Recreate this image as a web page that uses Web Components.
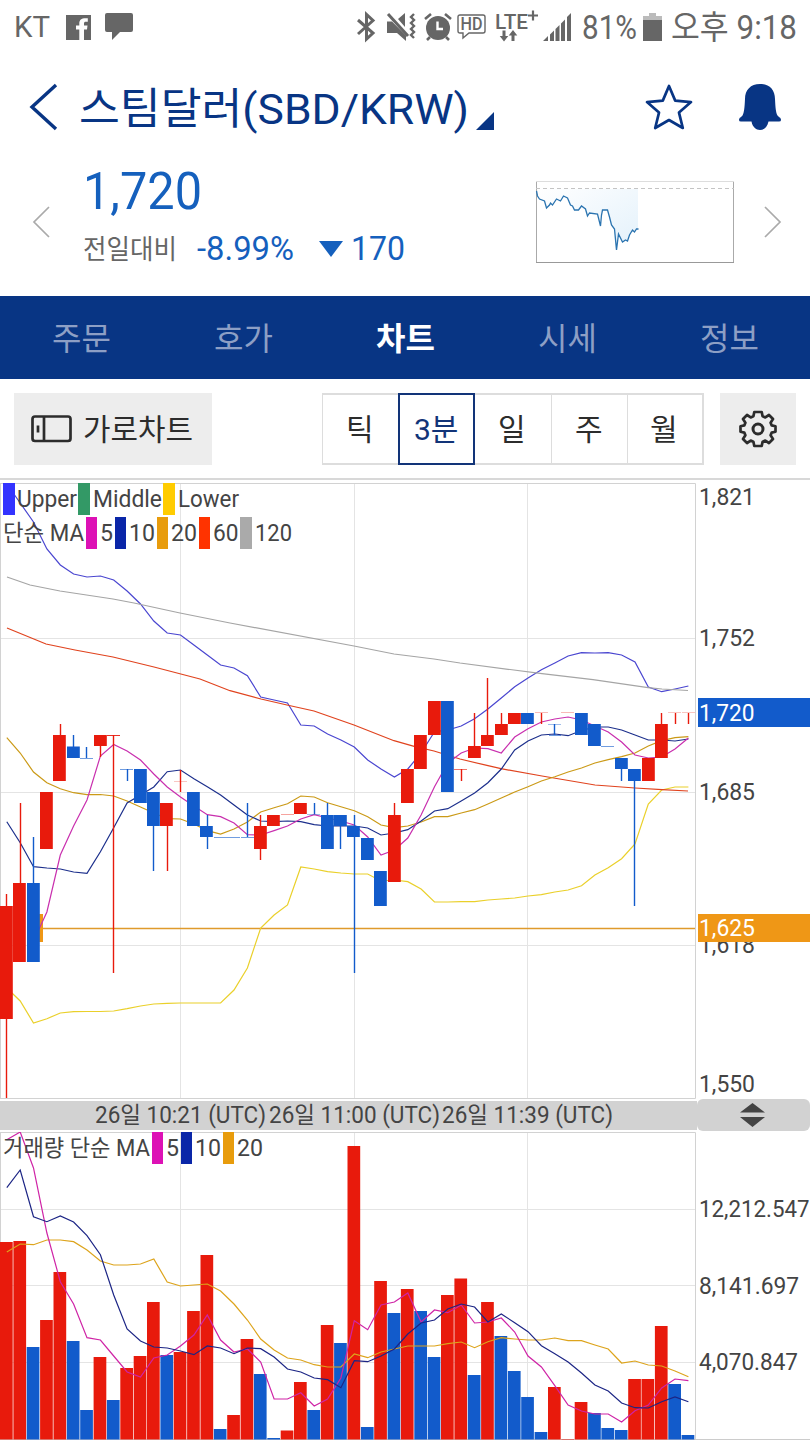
<!DOCTYPE html>
<html lang="ko">
<head>
<meta charset="utf-8">
<title>스팀달러(SBD/KRW)</title>
<style>
  body {
    margin: 0;
    width: 810px;
    height: 1440px;
    overflow: hidden;
    background: #fff;
    color: #444;
    font-family: Roboto, "Noto Sans CJK KR", sans-serif;
  }
</style>
</head>
<body>
<coin-app></coin-app>

<script>
// One line of text whose box is exactly cap-height tall; `width` squeezes it.
class CapText extends HTMLElement {

  constructor() {
    super();
    this.attachShadow({ mode: 'open' });
  }

  connectedCallback() {
    const size = Number(this.getAttribute('size') || 23);
    const width = this.getAttribute('width');
    const h = size * 0.711;
    const fit = width ? `textLength="${width}" lengthAdjust="spacingAndGlyphs"` : '';

    this.shadowRoot.innerHTML = `
      <style>
        :host { display: block; flex: none; }
        svg { display: block; overflow: visible; }
        text { fill: currentColor; white-space: pre; }
      </style>
      <svg height="${h}" width="${width || 1}">
        <text x="0" y="${h}" font-size="${size}" ${fit}>${this.getAttribute('text')}</text>
      </svg>
    `;

    if (!width) {
      const text = this.shadowRoot.querySelector('text');
      this.shadowRoot.querySelector('svg').setAttribute('width', text.getComputedTextLength());
    }
  }
}

customElements.define('cap-text', CapText);

const ICONS = {
  facebook: [25, 25, `<path fill="currentColor" fill-rule="evenodd" d="M0 0h25v25h-7V14.500h3l.5-4H18V8.500c0-1.200.5-1.700 1.800-1.700h2V3.300c-5.700-.7-8.500 1-8.500 5v2.200H10v4h3.300V25H0z"/>`],
  chat: [28, 28, `<path fill="currentColor" d="M2 0h24q2 0 2 2v15q0 2-2 2H15l-8 8v-8H2q-2 0-2-2V2q0-2 2-2z"/>`],
  bluetooth: [19, 30, `<path fill="none" stroke="currentColor" stroke-width="3" d="M1 8l15 13-6.500 6V2.500l6.500 6L1 22"/>`],
  mute: [30, 30, `<path fill="currentColor" d="M0 9.500h5l14 14V29l-9-8H0zM11 7l7-6v14z"/><path d="M1 2l20 22" stroke="currentColor" stroke-width="3"/><path fill="none" stroke="currentColor" stroke-width="2.400" d="M27 2l-3 3 3 3-3 3 3 3-3 3 3 3-3 3 3 3"/>`],
  alarm: [28, 30, `<circle cx="14" cy="16" r="12" fill="currentColor"/><path d="M1 7l6-5M27 7l-6-5M6 25l-3 3M22 25l3 3" stroke="currentColor" stroke-width="2.600"/><path d="M13.500 9.500v7.500H19" fill="none" stroke="#fff" stroke-width="2.400"/>`],
  hd: [29, 26, `<path fill="none" stroke="currentColor" stroke-width="1.400" d="M3 1h23q2 0 2 2v14q0 2-2 2H12l-6 5v-5H3q-2 0-2-2V3q0-2 2-2z"/><text x="3.500" y="16" font-size="17.500" font-weight="500" fill="currentColor" textLength="22" lengthAdjust="spacingAndGlyphs">HD</text>`],
  lte: [44, 30, `<text x="0" y="16.500" font-size="20" font-weight="500" fill="currentColor" textLength="33" lengthAdjust="spacingAndGlyphs">LTE</text><path d="M33 3.500h10M38-1.500v10" stroke="currentColor" stroke-width="2.200"/><path fill="currentColor" d="M7.500 18.500h3v5.500h2.800L9 29.500 4.700 24h2.800zM16.500 29h3v-5.500h2.800L18 18l-4.300 5.500h2.800z"/>`],
  signal: [28, 28, `<path fill="currentColor" d="M0 28l5-5v5zM7 21.500l4-4V28H7zM12.500 16l4-4V28h-4zM18 10.500l4-4V28h-4zM24 4l4-4v28h-4z"/>`],
  battery: [19, 28, `<path fill="#bbb" d="M6 0h7v3h6v5H0V3h6z"/><path fill="currentColor" d="M0 7h19v21H0z"/>`],
  back: [29, 48, `<path fill="none" stroke="currentColor" stroke-width="3.400" d="M26 2L2 24l24 22"/>`],
  prev: [17, 32, `<path fill="none" stroke="#aaa" stroke-width="1.700" d="M16 1L1 16l15 15"/>`],
  next: [17, 32, `<path fill="none" stroke="#aaa" stroke-width="1.700" d="M1 1l15 15L1 31"/>`],
  star: [48, 46, `<path fill="none" stroke="currentColor" stroke-width="2.700" stroke-linejoin="round" d="M24 2l6.200 14.600L46 18.100 34 28.600 37.800 44 24 36 10.200 44 14 28.600 2 18.100l15.800-1.500z"/>`],
  bell: [44, 46, `<path fill="currentColor" d="M22 0C12.500 0 7 6 7 15c-.5 9-.7 13-2.500 16.500C3.500 33 1 33.500 1 36q0 1.500 2 1.500h10.500C14.500 43 18 46 22 46s7.500-3 8.500-8.500H41q2 0 2-1.500c0-2.500-2.500-3-3.500-4.500C37.700 28 37.500 24 37 15 37 6 31.500 0 22 0z"/>`],
  corner: [18, 18, `<path fill="currentColor" d="M18 0v18H0z"/>`],
  down: [24, 16, `<path fill="currentColor" d="M0 0h24L12 16z"/>`],
  landscape: [41, 28, `<rect x="1.500" y="1.500" width="38" height="24.500" rx="2.500" fill="none" stroke="currentColor" stroke-width="2.700"/><path d="M13 1v25M7 10.500v7" stroke="currentColor" stroke-width="2.700"/>`],
  gear: [38, 38, `<path fill="none" stroke="currentColor" stroke-width="2.700" stroke-linejoin="round" d="M15.300 2h7.400l.9 4.300 2.700 1.100 3.700-2.400 4 4-2.400 3.700 1.100 2.700 3.800.9v5.400l-3.800.9-1.100 2.700 2.400 3.700-4 4-3.700-2.400-2.700 1.100-.9 4.300h-7.400l-.9-4.300-2.700-1.100L8 33l-4-4 2.400-3.700-1.100-2.700-3.800-.9v-5.400l3.800-.9 1.100-2.700L4 9l4-4 3.700 2.400 2.700-1.100z"/><circle cx="19" cy="19" r="5" fill="none" stroke="currentColor" stroke-width="3"/>`],
  resize: [25, 24, `<path fill="currentColor" d="M12.500 0L25 9.500H0zM12.500 24L25 14H0z"/>`]
};

class UiIcon extends HTMLElement {

  constructor() {
    super();
    this.attachShadow({ mode: 'open' });
  }

  connectedCallback() {
    const [w, h, body] = ICONS[this.getAttribute('name')];

    this.shadowRoot.innerHTML = `
      <style>
        :host { display: block; flex: none; }
        svg { display: block; overflow: visible; }
      </style>
      <svg width="${w}" height="${h}" viewBox="0 0 ${w} ${h}">${body}</svg>
    `;
  }
}

customElements.define('ui-icon', UiIcon);

class StatusBar extends HTMLElement {

  constructor() {
    super();
    this.attachShadow({ mode: 'open' });
  }

  connectedCallback() {
    this.shadowRoot.innerHTML = `
      <style>
        :host {
          display: grid;
          grid-template-columns: 52px 39px 252px 30px 37px 33px 38px 48px 39px 61px 28px auto;
          align-items: center;
          height: 54px;
          padding-left: 14px;
          box-sizing: border-box;
          color: #666;
        }
        cap-text:last-child { margin-top: 2px; }
      </style>
      <cap-text text="KT" size="30" width="36"></cap-text>
      <ui-icon name="facebook"></ui-icon>
      <ui-icon name="chat"></ui-icon>
      <ui-icon name="bluetooth"></ui-icon>
      <ui-icon name="mute"></ui-icon>
      <ui-icon name="alarm"></ui-icon>
      <ui-icon name="hd"></ui-icon>
      <ui-icon name="lte"></ui-icon>
      <ui-icon name="signal"></ui-icon>
      <cap-text text="81%" size="33.500" width="55"></cap-text>
      <ui-icon name="battery"></ui-icon>
      <cap-text text="오후 9:18" size="33" width="126"></cap-text>
    `;
  }
}

customElements.define('status-bar', StatusBar);

class CoinHeader extends HTMLElement {

  constructor() {
    super();
    this.attachShadow({ mode: 'open' });
  }

  connectedCallback() {
    this.shadowRoot.innerHTML = `
      <style>
        :host {
          display: flex;
          align-items: center;
          height: 106px;
          padding: 0 28px 0 30px;
          box-sizing: border-box;
          color: #083584;
        }
        cap-text { margin: 3px 0 0 20px; }
        ui-icon[name="corner"] { margin: 28px 0 0 7px; }
        ui-icon[name="star"] { margin-left: auto; }
        ui-icon[name="bell"] { margin-left: 45px; }
      </style>
      <ui-icon name="back"></ui-icon>
      <cap-text text="${this.getAttribute('name')}" size="43" width="390"></cap-text>
      <ui-icon name="corner"></ui-icon>
      <ui-icon name="star"></ui-icon>
      <ui-icon name="bell"></ui-icon>
    `;
  }
}

customElements.define('coin-header', CoinHeader);

class SparkLine extends HTMLElement {

  constructor() {
    super();
    this.attachShadow({ mode: 'open' });
  }

  connectedCallback() {
    const line = '0,10 1,15 3,18 8,20 10,27 13,24 14,22 16,24 20,18 24,20 27,15 31,17 34,24 36,25 38,29 42,29 45,25 49,28 51,35 53,32 61,33 64,45 65,34 66,29 71,29 73,36 75,44 78,48 80,69 82,53 84,57 86,61 89,59 91,60 93,54 96,49 98,51 100,48 102,48';

    this.shadowRoot.innerHTML = `
      <style>
        :host { display: block; }
        svg { display: block; overflow: visible; }
      </style>
      <svg width="198" height="82">
        <defs>
          <linearGradient id="fill" x1="0" x2="1" y1="0" y2="1">
            <stop offset="0" stop-color="#fff"/>
            <stop offset="1" stop-color="#e3f1fb"/>
          </linearGradient>
        </defs>
        <polygon points="0,8 ${line} 102,8" fill="url(#fill)"/>
        <path d="M.5 1v81M197.500 1v81" stroke="#aaa"/>
        <path d="M0 .5h198" stroke="#ddd"/>
        <path d="M0 81.500h198" stroke="#999"/>
        <path d="M0 7.500h198" stroke="#c4c4c4" stroke-dasharray="4 3"/>
        <polyline points="${line}" transform="translate(.5)" fill="none" stroke="#2b74b0" stroke-width="1.300"/>
      </svg>
    `;
  }
}

customElements.define('spark-line', SparkLine);

class PriceSummary extends HTMLElement {

  constructor() {
    super();
    this.attachShadow({ mode: 'open' });
  }

  connectedCallback() {
    this.shadowRoot.innerHTML = `
      <style>
        :host {
          display: flex;
          height: 136px;
          padding: 0 29px 0 33px;
          box-sizing: border-box;
          color: #1560bd;
        }
        .values { flex: 1; padding: 12px 0 0 33px; }
        .change { display: flex; align-items: center; margin-top: 28px; }
        .label { color: #666; margin: 1px 20px 0 0; }
        .percent { margin-right: 25px; }
        .change ui-icon { margin-right: 8px; }
        spark-line { margin: 21px 30px 0 0; }
        ui-icon[name="prev"], ui-icon[name="next"] { margin-top: 46px; }
      </style>
      <ui-icon name="prev"></ui-icon>
      <div class="values">
        <cap-text text="1,720" size="52" width="119"></cap-text>
        <div class="change">
          <cap-text class="label" text="전일대비" size="27" width="94"></cap-text>
          <cap-text class="percent" text="-8.99%" size="33" width="97"></cap-text>
          <ui-icon name="down"></ui-icon>
          <cap-text text="170" size="33" width="54"></cap-text>
        </div>
      </div>
      <spark-line></spark-line>
      <ui-icon name="next"></ui-icon>
    `;
  }
}

customElements.define('price-summary', PriceSummary);

class TabBar extends HTMLElement {

  constructor() {
    super();
    this.attachShadow({ mode: 'open' });
  }

  connectedCallback() {
    const active = this.getAttribute('active');
    const tabs = this.getAttribute('tabs').split(',');

    this.shadowRoot.innerHTML = `
      <style>
        :host { display: flex; height: 83px; background: #083584; color: #8d9fc5; }
        .tab { flex: 1; display: flex; align-items: center; justify-content: center; padding-top: 2px; }
        .active { color: #fff; font-weight: 700; }
      </style>
      ${tabs.map(t => `<div class="tab ${t === active ? 'active' : ''}"><cap-text text="${t}" size="32"></cap-text></div>`).join('')}
    `;
  }
}

customElements.define('tab-bar', TabBar);

class ChartToolbar extends HTMLElement {

  constructor() {
    super();
    this.attachShadow({ mode: 'open' });
  }

  connectedCallback() {
    const periods = ['틱', '3분', '일', '주', '월'];

    this.shadowRoot.innerHTML = `
      <style>
        :host {
          display: flex;
          height: 101px;
          padding: 14px 14px 0;
          box-sizing: border-box;
          border-bottom: 2px solid #d8d8d8;
          color: #2c2c2c;
        }
        .button {
          display: flex;
          align-items: center;
          justify-content: center;
          height: 72px;
          background: #ededed;
        }
        .rotate { width: 198px; gap: 11px; box-sizing: border-box; padding-right: 2px; }
        .settings { width: 76px; margin-left: 16px; }
        .periods { display: flex; margin-left: auto; height: 72px; }
        .period {
          display: flex;
          align-items: center;
          justify-content: center;
          box-sizing: border-box;
          width: 76px;
          border: solid #ddd;
          border-width: 2px 0 2px 1.500px;
        }
        .period:last-child { border-right-width: 2px; width: 77px; }
        .active { border: 2px solid #123478; color: #123478; width: 77px; }
        .active + .period { border-left: 0; }
        cap-text { margin-top: 2px; }
        .period cap-text { margin-right: 1.500px; }
      </style>
      <div class="button rotate">
        <ui-icon name="landscape"></ui-icon>
        <cap-text text="가로차트" size="30" width="110"></cap-text>
      </div>
      <div class="periods">
        ${periods.map(p => `<div class="period ${p === '3분' ? 'active' : ''}"><cap-text text="${p}" size="30"></cap-text></div>`).join('')}
      </div>
      <div class="button settings"><ui-icon name="gear"></ui-icon></div>
    `;
  }
}

customElements.define('chart-toolbar', ChartToolbar);

// items: "label:width" or "label:width:colour", the swatch goes before its label
class ChartLegend extends HTMLElement {

  constructor() {
    super();
    this.attachShadow({ mode: 'open' });
  }

  connectedCallback() {
    const items = this.getAttribute('items').split('|').map(item => {
      const [label, width, color] = item.split(':');
      const swatch = color ? `<i style="background:${color}"></i>` : '';
      return `${swatch}<cap-text text="${label}" width="${width}"></cap-text>`;
    });

    this.shadowRoot.innerHTML = `
      <style>
        :host { display: flex; align-items: center; height: 32px; margin-bottom: 2px; padding-left: 3px; }
        i { flex: none; width: 11.500px; height: 32px; margin: 0 3px 0 1.500px; }
        style + i { margin-left: 0; margin-right: 2px; }
      </style>
      ${items.join('')}
    `;
  }
}

customElements.define('chart-legend', ChartLegend);

const SLOT = 13.365;
const UP = '#e81a0c';
const DOWN = '#125bcb';
const center = i => 6.8 + i * SLOT;

const polyline = (values, color, from = 0) => {
  const points = values.map((y, i) => `${center(i + from).toFixed(1)},${y}`).join(' ');
  return freeLine(points, color);
};

const freeLine = (points, color) =>
  `<polyline points="${points}" fill="none" stroke="${color}" stroke-width="1.200"/>`;

// [direction, high, body top, body bottom, low, opacity of a flat body]
const CANDLES = [
  ['u', 894, 906, 1019, 1098], ['u', 803, 883, 962, 962], ['d', 837, 883, 962, 962], ['u', 792, 792, 849, 849],
  ['u', 724, 735, 781, 781], ['d', 735, 746.5, 758, 758], ['d', 747, 758, 758, 758], ['u', 735, 735, 746, 757],
  ['u', 735, 735, 735, 973, 0.9], ['d', 769, 769, 769, 781], ['d', 769, 769, 803, 803], ['d', 792, 792, 826, 871],
  ['u', 803, 803, 826, 871], ['u', 770, 781, 781, 792, 0.25], ['d', 792, 792, 826, 826], ['d', 815, 826, 837, 849],
  ['d', 837, 837, 837, 837], ['d', 837, 837, 837, 837], ['d', 803, 837, 837, 837], ['u', 815, 826, 849, 860],
  ['u', 815, 815, 826, 826], ['u', 814, 814, 814, 814, 0.4], ['u', 803, 803, 814, 814], ['d', 803, 814, 814, 814, 0.4],
  ['d', 803, 815, 849, 849], ['d', 815, 815, 826, 849], ['d', 815, 826, 837, 973], ['d', 838, 838, 860, 860],
  ['d', 871, 871, 906, 906], ['u', 803, 815, 882, 882], ['u', 769, 769, 803, 803], ['u', 735, 735, 769, 769],
  ['u', 701, 701, 735, 735], ['d', 701, 701, 792, 792], ['u', 769, 769, 769, 781], ['u', 713, 746, 758, 758],
  ['u', 678, 735, 746, 746], ['u', 713, 724, 735, 735], ['u', 713, 713, 724, 724], ['d', 713, 713, 724, 724],
  ['u', 713, 712, 712, 724, 0.3], ['d', 724, 724, 724, 735, 0.4], ['u', 712, 712, 712, 712, 0.3], ['d', 713, 713, 735, 735],
  ['d', 724, 724, 746, 746], ['d', 746, 746, 746, 746], ['d', 758, 758, 769, 781], ['d', 769, 769, 781, 906],
  ['u', 758, 758, 781, 781], ['u', 713, 724, 758, 758], ['u', 713, 712, 712, 724, 0.25], ['u', 713, 712, 712, 724, 0.25]
];

class PriceChart extends HTMLElement {

  constructor() {
    super();
    this.attachShadow({ mode: 'open' });
  }

  candle([dir, high, top, bottom, low, opacity = 0.6], i) {
    const color = dir === 'u' ? UP : DOWN;
    const x = Math.round(i * SLOT);
    const cx = Math.floor(center(i)) + 0.5;
    const wick = low > high ? `<path d="M${cx} ${high}V${low}" stroke="${color}" stroke-width="1.400"/>` : '';
    const body = bottom > top
      ? `<rect x="${x}" y="${top}" width="12.800" height="${bottom - top}" fill="${color}"/>`
      : `<rect x="${x}" y="${top}" width="13" height="1" fill="${color}" opacity="${opacity}"/>`;
    return wick + body;
  }

  connectedCallback() {
    const upper = [484, 503, 522, 549, 565, 574, 577, 576, 580, 591, 604, 621, 633, 635, 645, 655, 665, 668, 675.7, 697, 700, 703, 725, 726, 734, 740, 747, 760, 769, 777, 769, 753, 731.7, 730, 726, 718.7, 709, 698, 686.7, 678, 669.7, 663, 656, 652.7, 653, 652.7, 655, 662, 687, 691.7, 689, 686];
    const lower = [988, 1001, 1023, 1018.7, 1013, 1011.7, 1011.5, 1011.5, 1011, 1008.7, 1006, 1004, 1003.3, 1003, 1003, 1003, 1003, 990, 968, 928, 915, 905, 867, 869, 871.7, 873, 874, 874, 881, 880, 881.7, 889, 902, 902, 901.6, 901.6, 900, 899, 898, 896, 894.7, 892, 890, 885.7, 875, 867.7, 858.7, 844, 804, 790, 787, 787];
    const ma5 = [941, 912, 855, 826, 800, 756, 744.5, 751, 760, 774, 787, 797, 806, 814.7, 816.7, 823, 834.7, 835, 830.6, 826, 819, 814.7, 818, 821, 825, 837, 855, 850, 838, 815, 786.7, 763, 753, 748, 748.7, 753, 737, 728.7, 722, 719, 717, 720, 726, 732, 742, 755, 758, 757, 749, 738];
    const ma10 = [821.7, 842.7, 866.7, 868, 869, 872, 873.3, 851.7, 827.7, 803, 795, 787, 771.7, 770, 778.7, 786.7, 795, 805, 815, 821, 821.7, 821, 821.7, 824.7, 826, 826, 826, 828, 835, 833, 829.7, 821, 811, 808.7, 801, 793, 782.7, 769, 750, 741, 735, 734, 735.7, 730.5, 727, 727, 730, 735, 740, 740, 741, 739];
    const ma20 = [737.7, 753, 772, 782.7, 788.7, 792.7, 794.7, 794.5, 796, 801, 807, 813, 818.7, 819, 824, 830.7, 834, 829, 822, 812, 807.7, 803.7, 796, 797, 802.7, 806.7, 810.7, 816.7, 825, 827.7, 826, 822, 816.7, 816.7, 813, 809.7, 804, 798, 792, 786.7, 781, 776.7, 772, 768, 763, 759.7, 756.7, 753, 746, 740.7, 737.7, 736.7];
    const labels = [['1,821', 505.3], ['1,752', 646], ['1,685', 800], ['1,618', 952.7], ['1,550', 1092]];

    this.shadowRoot.innerHTML = `
      <style>
        :host { display: block; position: relative; height: 621px; }
        svg { display: block; }
        .legend { position: absolute; left: 0; top: 3px; }
        text { font-size: 23px; fill: #444; }
        .tag { fill: #fff; }
      </style>
      <svg width="810" height="621" viewBox="0 480 810 621">
        <path d="M180.500 483V1098M354.500 483V1098M527.500 483V1098M0 638.500H695M0 792.500H695M0 945.500H695" stroke="#e4e4e4"/>
        <path d="M0 483.500H695.500V1098.500H0M.5 483V1098" fill="none" stroke="#d2d2d2"/>
        <rect x="27" y="914" width="16" height="28" fill="#ef9716"/>
        <path d="M43 928.500H695" stroke="#df9a2c" stroke-width="1.400"/>
        ${polyline(upper, '#4a46d0')}
        ${polyline(lower, '#ead02a')}
        ${freeLine('7,577 30,585 60,591 113,599 134,603 180,613 230,623 354,646 394,654 434,659 460,663 542,673.700 593,679.700 648,687.700 662,689 688,690.500', '#a5a5a5')}
        ${freeLine('7,628 46,644 75,650 113,657 154,667 200,679 230,690.700 261,699 287,705 314,711 354,725 394,740.700 415,746.700 434,751 460,759 488,765.700 501,768.700 542,776 595,785 635,788 662,789.700 688,791', '#e0431e')}
        ${polyline(ma20, '#cb9a17')}
        ${polyline(ma10, '#1c2f8c')}
        ${polyline(ma5, '#c92fae', 2)}
        ${CANDLES.map(this.candle).join('')}
        <path d="M549 735.500h12" stroke="${DOWN}" opacity=".6"/>
        ${labels.map(([t, y]) => `<text x="699" y="${y}" textLength="56" lengthAdjust="spacingAndGlyphs">${t}</text>`).join('')}
        <rect x="698" y="698" width="112" height="29" fill="${DOWN}"/>
        <text class="tag" x="699" y="720.700" textLength="55.500" lengthAdjust="spacingAndGlyphs">1,720</text>
        <rect x="698" y="914" width="112" height="28" fill="#ef9716"/>
        <text class="tag" x="699" y="936" textLength="56" lengthAdjust="spacingAndGlyphs">1,625</text>
      </svg>
      <div class="legend">
        <chart-legend items="Upper:60:#3333ff|Middle:69:#339966|Lower:61:#ffcc00"></chart-legend>
        <chart-legend items="단순 MA:81|5:13:#dd11b5|10:26:#0a26a8|20:26:#e89c0c|60:25.500:#ff3300|120:37:#aaaaaa"></chart-legend>
      </div>
    `;
  }
}

customElements.define('price-chart', PriceChart);

class TimeAxis extends HTMLElement {

  constructor() {
    super();
    this.attachShadow({ mode: 'open' });
  }

  connectedCallback() {
    const times = ['10:21', '11:00', '11:39'];

    this.shadowRoot.innerHTML = `
      <style>
        :host { display: flex; height: 31px; align-items: center; }
        .times {
          display: flex;
          gap: 2.500px;
          align-items: center;
          box-sizing: border-box;
          width: 697px;
          height: 29px;
          padding-left: 95px;
          margin-bottom: 2px;
          background: #d2d2d2;
        }
        .handle {
          display: flex;
          align-items: center;
          justify-content: center;
          box-sizing: border-box;
          flex: 1;
          height: 32px;
          margin-bottom: 3px;
          padding-right: 2px;
          border-radius: 6px;
          background: #d2d2d2;
        }
      </style>
      <div class="times">
        ${times.map(t => `<cap-text text="26일 ${t} (UTC)" width="171"></cap-text>`).join('')}
      </div>
      <div class="handle"><ui-icon name="resize"></ui-icon></div>
    `;
  }
}

customElements.define('time-axis', TimeAxis);

class VolumeChart extends HTMLElement {

  constructor() {
    super();
    this.attachShadow({ mode: 'open' });
  }

  connectedCallback() {
    const bars = [
      'u1242', 'u1241', 'd1347', 'u1320', 'u1272', 'd1341', 'd1410', 'u1357', 'd1400', 'u1368', 'u1356', 'u1302', 'd1355',
      'u1352', 'u1311', 'u1255', 'd1429', 'u1415', 'u1339', 'd1374', 'd1438', 'u1430.5', 'u1382', 'd1410', 'u1325', 'd1343',
      'u1146', 'd1427', 'u1281', 'd1313', 'u1289', 'd1311', 'd1357', 'u1295', 'u1278.5', 'd1375', 'u1302', 'd1336', 'd1371',
      'd1397', 'd1432', 'u1387', 'u1439', 'u1402', 'd1413', 'd1428', 'd1430', 'u1379', 'u1379', 'u1326', 'd1384', 'd1435'
    ];
    const ma5 = [1139.7, 1132, 1168, 1233, 1281.7, 1304, 1337.7, 1340, 1356, 1372, 1377, 1358, 1355, 1346, 1335, 1315, 1340, 1352, 1349, 1362, 1399, 1399, 1392.7, 1406, 1399, 1378, 1320.7, 1329.7, 1305, 1302, 1293, 1322, 1310, 1312.7, 1305, 1323, 1322, 1318, 1332, 1356, 1367, 1385.7, 1405, 1411, 1414, 1414, 1422, 1410.7, 1405, 1388, 1379, 1380.7];
    const ma10 = [1187.7, 1170, 1216.7, 1221.7, 1216, 1222, 1235.7, 1254.7, 1295, 1329, 1341, 1347, 1348, 1351, 1354.7, 1346, 1348, 1353.7, 1348, 1348.7, 1357, 1369, 1372, 1378, 1379.7, 1387.7, 1360.7, 1361.7, 1356, 1349, 1334, 1323, 1320, 1309, 1304, 1307, 1322, 1314, 1322.7, 1331.7, 1345.7, 1353.7, 1362, 1373, 1385, 1391, 1403, 1407.7, 1408, 1401.7, 1397, 1401.7];
    const ma20 = [1252, 1244, 1244.7, 1240, 1240, 1241.7, 1250, 1261, 1265, 1265, 1264, 1259, 1282, 1286, 1285, 1284, 1291, 1304, 1320, 1339, 1350, 1358, 1360, 1364.7, 1367, 1367, 1354, 1357.7, 1352, 1349, 1346, 1346, 1346, 1343.7, 1342, 1347.7, 1341.7, 1337.7, 1339, 1340, 1340, 1338, 1340.7, 1340.7, 1345, 1349, 1363, 1361, 1365, 1366, 1371, 1376.7];
    const labels = [['12,212.547', 1217, 110.5], ['8,141.697', 1294, 100], ['4,070.847', 1370, 99]];

    this.shadowRoot.innerHTML = `
      <style>
        :host { display: block; position: relative; height: 308px; }
        svg { display: block; }
        .legend { position: absolute; left: 0; top: 0; }
        text { font-size: 23px; fill: #444; }
      </style>
      <svg width="810" height="308" viewBox="0 1132 810 308">
        <path d="M180.500 1132V1440M354.500 1132V1440M527.500 1132V1440M0 1209.500H695M0 1285.500H695M0 1362.500H695" stroke="#e4e4e4"/>
        <path d="M0 1132.500H695.500V1440M.5 1132V1440" fill="none" stroke="#d2d2d2"/>
        <path d="M0 1439.500H810" stroke="#ccc"/>
        ${bars.map((bar, i) => `<rect x="${(i * SLOT).toFixed(1)}" y="${bar.slice(1)}" width="12.700" height="${1439.5 - bar.slice(1)}" fill="${bar[0] === 'u' ? UP : DOWN}"/>`).join('')}
        ${polyline(ma20, '#dda41c')}
        ${polyline(ma5, '#cf24a6')}
        ${polyline(ma10, '#1c2585')}
        ${labels.map(([t, y, w]) => `<text x="699" y="${y}" textLength="${w}" lengthAdjust="spacingAndGlyphs">${t}</text>`).join('')}
      </svg>
      <div class="legend">
        <chart-legend items="거래량 단순 MA:147|5:13:#dd11b5|10:26:#0a26a8|20:26:#e89c0c"></chart-legend>
      </div>
    `;
  }
}

customElements.define('volume-chart', VolumeChart);

class CoinApp extends HTMLElement {

  constructor() {
    super();
    this.attachShadow({ mode: 'open' });
  }

  connectedCallback() {
    this.shadowRoot.innerHTML = `
      <style>
        :host { display: flex; flex-direction: column; height: 1440px; }
        :host > * { flex: none; }
      </style>
      <status-bar></status-bar>
      <coin-header name="스팀달러(SBD/KRW)"></coin-header>
      <price-summary></price-summary>
      <tab-bar tabs="주문,호가,차트,시세,정보" active="차트"></tab-bar>
      <chart-toolbar></chart-toolbar>
      <price-chart></price-chart>
      <time-axis></time-axis>
      <volume-chart></volume-chart>
    `;
  }
}

customElements.define('coin-app', CoinApp);
</script>
</body>
</html>
